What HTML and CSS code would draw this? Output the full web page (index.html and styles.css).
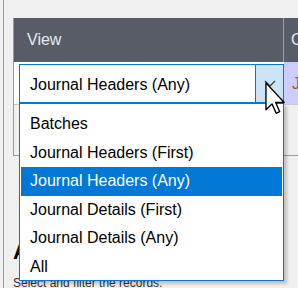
FILE: index.html
```html
<!DOCTYPE html>
<html lang="en">
<head>
    <meta charset="UTF-8">
    <title>View picker</title>
    <link rel="stylesheet" href="styles.css">
</head>
<body>
    <div class="window">
        <div class="grid">
            <div class="grid-head">
                <div class="col col-view">View</div>
                <div class="col col-next">Code</div>
            </div>
            <div class="grid-row">
                <div class="cell cell-view">
                    <div class="combo">
                        <span class="combo-text">Journal Headers (Any)</span>
                        <span class="combo-btn">
                            <svg width="12" height="8" viewBox="0 0 12 8"><path d="M1 1 L6 6 L11 1" fill="none" stroke="#444" stroke-width="1.4"/></svg>
                        </span>
                    </div>
                </div>
                <div class="cell cell-next">JE</div>
            </div>
        </div>
        <h2 class="section">Advanced Options</h2>
        <p class="hint">Select and filter the records.</p>

        <ul class="dropdown">
            <li>Batches</li>
            <li>Journal Headers (First)</li>
            <li class="selected">Journal Headers (Any)</li>
            <li>Journal Details (First)</li>
            <li>Journal Details (Any)</li>
            <li>All</li>
        </ul>

        <svg class="cursor" width="21" height="33" viewBox="0 0 12 19">
            <path d="M0.5 0.5 L0.5 16 L4 12.6 L6.4 18 L8.4 17.1 L6.1 11.8 L11 11.8 Z" fill="#fff" stroke="#000" stroke-width="0.8" stroke-linejoin="round"/>
        </svg>
    </div>
</body>
</html>
```

FILE: styles.css
```css
body {
    margin: 0;
    padding: 0;
    background-color: #f0f0f0;
    font-family: "Liberation Sans", Arial, sans-serif;
    overflow: hidden;
}
.window {
    position: relative;
    width: 298px;
    height: 288px;
    border-left: 1px solid #a0a0a0;
    margin-left: 3px;
    box-sizing: border-box;
    padding: 18px 0 0 9px;
    overflow: hidden;
}
.grid {
    border-left: 1px solid #9a9a9a;
    border-bottom: 1px solid #9a9a9a;
    height: 137px;
    background-color: #f0f0f0;
}
.grid-head {
    display: flex;
    height: 44px;
    background-color: #575c66;
    color: #e4e9f0;
    font-size: 16px;
}
.col {
    display: flex;
    align-items: center;
    padding-left: 13px;
}
.col-view {
    width: 256px;
    border-right: 1px solid #9ca0a8;
}
.col-next {
    flex: 1;
    padding-left: 7px;
    overflow: hidden;
    white-space: nowrap;
}
.grid-row {
    display: flex;
    height: 42px;
    background-color: #fff;
    border-bottom: 1px solid #c8c8c8;
}
.cell-view {
    width: 270px;
    padding: 2px 0 0 5px;
    box-sizing: border-box;
}
.combo {
    display: flex;
    height: 39px;
    border: 1px solid #0078d7;
    box-sizing: border-box;
    background-color: #fff;
}
.combo-text {
    flex: 1;
    display: flex;
    align-items: center;
    padding: 3px 0 0 10px;
    font-size: 16px;
    color: #000;
}
.combo-btn {
    width: 27px;
    background-color: #cce4f7;
    border-left: 1px solid #0078d7;
    display: flex;
    align-items: center;
    justify-content: center;
}
.cell-next {
    flex: 1;
    background-color: #ccccff;
    color: #9a5a10;
    font-size: 16px;
    padding: 13px 0 0 8px;
    overflow: hidden;
    white-space: nowrap;
}
.section {
    margin: 0;
    padding-top: 83px;
    font-size: 22px;
    font-weight: bold;
    color: #000;
    white-space: nowrap;
    overflow: hidden;
}
.hint {
    margin: 11px 0 0;
    font-size: 12px;
    color: #333;
    white-space: nowrap;
}
.dropdown {
    position: absolute;
    left: 15px;
    top: 103px;
    width: 265px;
    height: 178px;
    margin: 0;
    padding: 1px;
    list-style: none;
    background-color: #fff;
    border: 1px solid #0078d7;
    box-shadow: 3px 3px 3px rgba(0, 0, 0, 0.2);
    box-sizing: border-box;
    font-size: 16px;
}
.dropdown li {
    height: 28.5px;
    line-height: 28.5px;
    padding-left: 9px;
    color: #000;
}
.dropdown li:first-child {
    margin-top: 5px;
}
.dropdown li.selected {
    background-color: #0078d7;
    color: #fff;
}
.cursor {
    position: absolute;
    left: 261px;
    top: 82px;
}
```
